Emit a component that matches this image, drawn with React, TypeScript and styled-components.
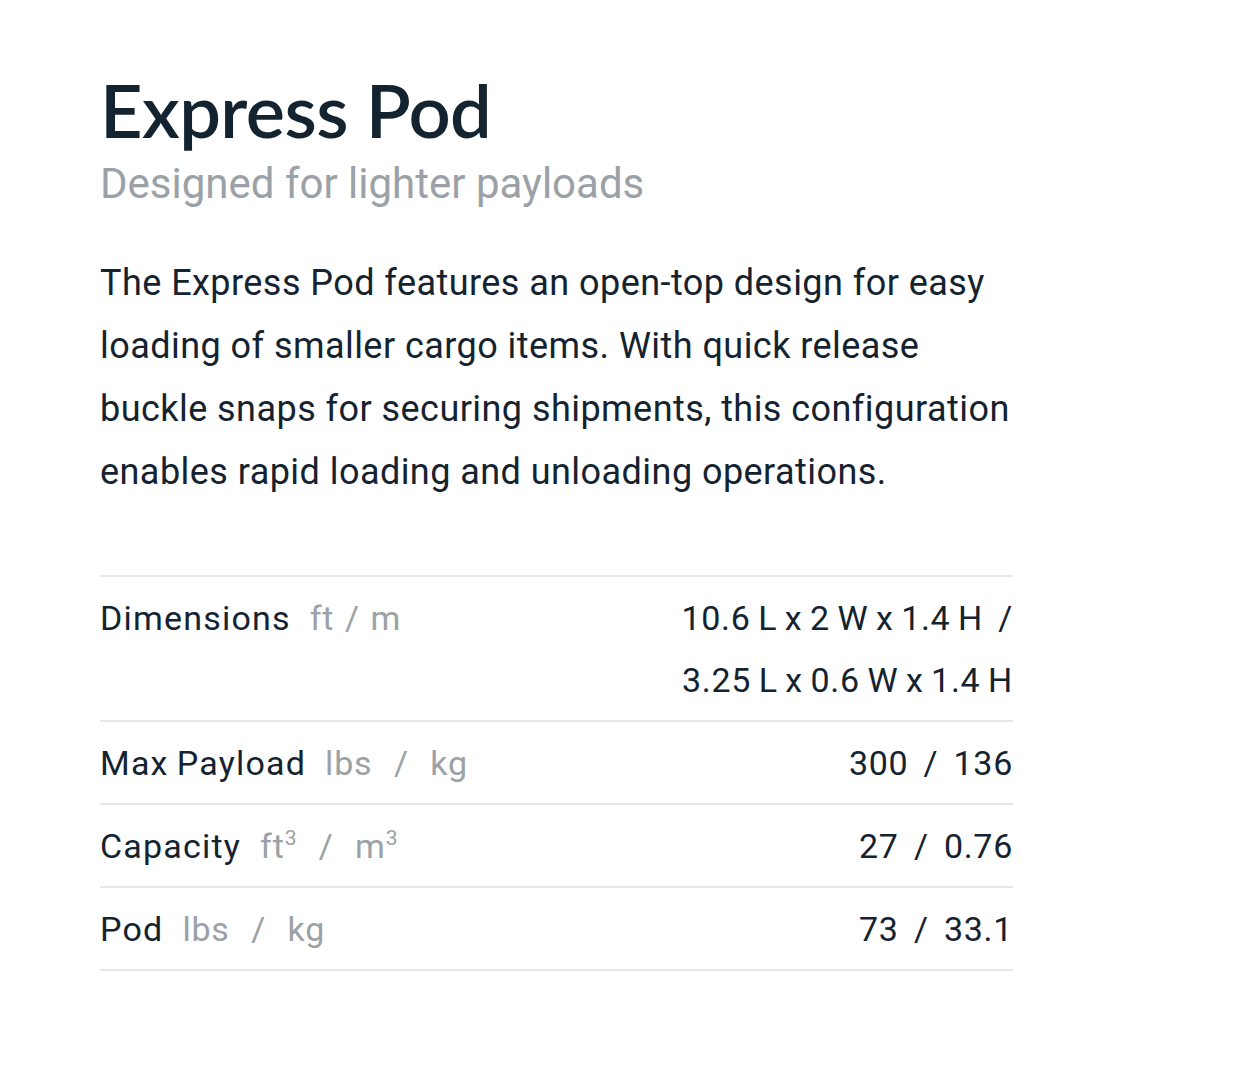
import styled, { createGlobalStyle } from 'styled-components';

const GlobalStyle = createGlobalStyle`
  body {
    margin: 0;
    background: #ffffff;
    color: #14232f;
    font-family: Roboto, "Noto Sans", sans-serif;
  }
`;

const Page = styled.main`
  display: flex;
  flex-direction: column;
  width: 913px;
  padding: 66px 0 0 100px;
`;

const Title = styled.h1`
  margin: 0;
  font-family: Lato, "Noto Sans", sans-serif;
  font-size: 74px;
  font-weight: 600;
  line-height: 88px;
  letter-spacing: -0.6px;
  color: #13232f;
`;

const Subtitle = styled.h2`
  margin: 2px 0 0;
  font-size: 42px;
  font-weight: 400;
  line-height: 56px;
  color: #9ba1a6;
`;

const Description = styled.p`
  margin: 40px 0 0;
  font-size: 36px;
  line-height: 63px;
  letter-spacing: 0.45px;
`;

const SpecTable = styled.div`
  display: flex;
  flex-direction: column;
  margin-top: 71px;
  border-top: 2px solid #e7e7ea;
`;

const SpecRow = styled.div`
  display: flex;
  justify-content: space-between;
  align-items: flex-start;
  padding: 10px 0 9px;
  border-bottom: 2px solid #e7e7ea;
  font-size: 34px;
  line-height: 62px;
  letter-spacing: 0.7px;
  word-spacing: -1.5px;
`;

const Label = styled.div`
  display: flex;
  align-items: baseline;
  gap: 19px;
  white-space: pre;
  letter-spacing: 1.2px;
`;

const Unit = styled.span`
  color: #9ba1a6;
  white-space: pre;
  letter-spacing: 0.8px;
  word-spacing: 1.5px;

  sup {
    font-size: 21px;
    line-height: 0;
    vertical-align: 13px;
  }
`;

const Value = styled.div`
  display: flex;
  flex-direction: column;
  align-items: flex-end;
  text-align: right;
  white-space: pre;
`;

type Spec = {
  label: string;
  unit: React.ReactNode;
  values: string[];
};

const specs: Spec[] = [
  {
    label: 'Dimensions',
    unit: 'ft / m',
    values: ['10.6 L x 2 W x 1.4 H  /', '3.25 L x 0.6 W x 1.4 H'],
  },
  { label: 'Max Payload', unit: 'lbs  /  kg', values: ['300  /  136'] },
  {
    label: 'Capacity',
    unit: (
      <>
        ft<sup>3</sup>
        {'  /  '}m<sup>3</sup>
      </>
    ),
    values: ['27  /  0.76'],
  },
  { label: 'Pod', unit: 'lbs  /  kg', values: ['73  /  33.1'] },
];

export default function App() {
  return (
    <>
      <GlobalStyle />
      <Page>
        <Title>Express Pod</Title>
        <Subtitle>Designed for lighter payloads</Subtitle>
        <Description>
          The Express Pod features an open-top design for easy loading of smaller cargo items. With
          quick release buckle snaps for securing shipments, this configuration enables rapid
          loading and unloading operations.
        </Description>
        <SpecTable>
          {specs.map((spec) => (
            <SpecRow key={spec.label}>
              <Label>
                <span>{spec.label}</span>
                <Unit>{spec.unit}</Unit>
              </Label>
              <Value>
                {spec.values.map((v) => (
                  <span key={v}>{v}</span>
                ))}
              </Value>
            </SpecRow>
          ))}
        </SpecTable>
      </Page>
    </>
  );
}
